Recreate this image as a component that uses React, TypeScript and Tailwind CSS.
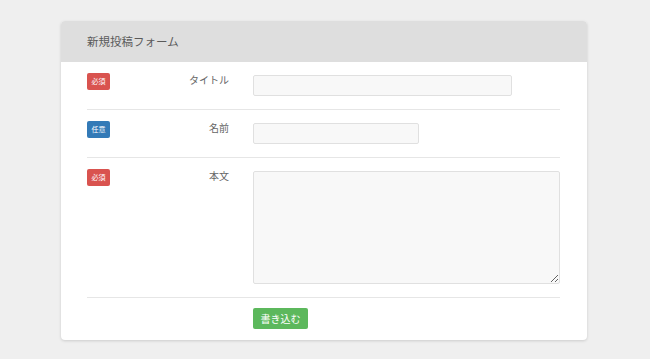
import React from "react";

const font = { fontFamily: '"Noto Sans CJK JP", "Noto Sans", sans-serif' };

function Badge({ kind }: { kind: "req" | "opt" }) {
  return (
    <span
      className={`inline-flex h-[17px] w-[23px] items-center justify-center rounded-[2px] text-[7px] leading-none text-white ${
        kind === "req" ? "bg-[#d9534f]" : "bg-[#337ab7]"
      }`}
    >
      {kind === "req" ? "必須" : "任意"}
    </span>
  );
}

function Row({
  kind,
  label,
  children,
}: {
  kind: "req" | "opt";
  label: string;
  children: React.ReactNode;
}) {
  return (
    <div className="flex border-b border-[#e6e6e6] pt-[11px] pb-[13px]">
      <div className="flex w-[142px] shrink-0 items-start justify-between">
        <Badge kind={kind} />
        <span className="text-[10px] leading-[14px] text-[#666]">{label}</span>
      </div>
      <div className="ml-[24px] flex-1 pt-[2px]">{children}</div>
    </div>
  );
}

export default function App() {
  return (
    <div className="min-h-[359px] w-[650px] bg-[#efefef] pt-[21px]" style={font}>
      <div className="ml-[61px] w-[526px] overflow-hidden rounded-[4px] bg-white shadow-[0_1px_3px_rgba(0,0,0,0.15)]">
        <div className="flex h-[41px] items-center bg-[#dedede] px-[26px] text-[11.5px] text-[#5a5a5a]">
          新規投稿フォーム
        </div>
        <div className="pl-[26px] pr-[27px]">
          <Row kind="req" label="タイトル">
            <input
              className="block h-[21px] w-[259px] rounded-[2px] border border-[#e0e0e0] bg-[#f8f8f8] outline-none"
              type="text"
            />
          </Row>
          <Row kind="opt" label="名前">
            <input
              className="block h-[21px] w-[166px] rounded-[2px] border border-[#e0e0e0] bg-[#f8f8f8] outline-none"
              type="text"
            />
          </Row>
          <Row kind="req" label="本文">
            <textarea className="block h-[113px] w-full rounded-[2px] border border-[#e0e0e0] bg-[#f8f8f8] outline-none" />
          </Row>
          <div className="flex pt-[10px] pb-[11px]">
            <div className="w-[166px] shrink-0" />
            <button className="flex h-[21px] w-[55px] items-center justify-center rounded-[2px] bg-[#5cb85c] text-[10px] text-white">
              書き込む
            </button>
          </div>
        </div>
      </div>
    </div>
  );
}
